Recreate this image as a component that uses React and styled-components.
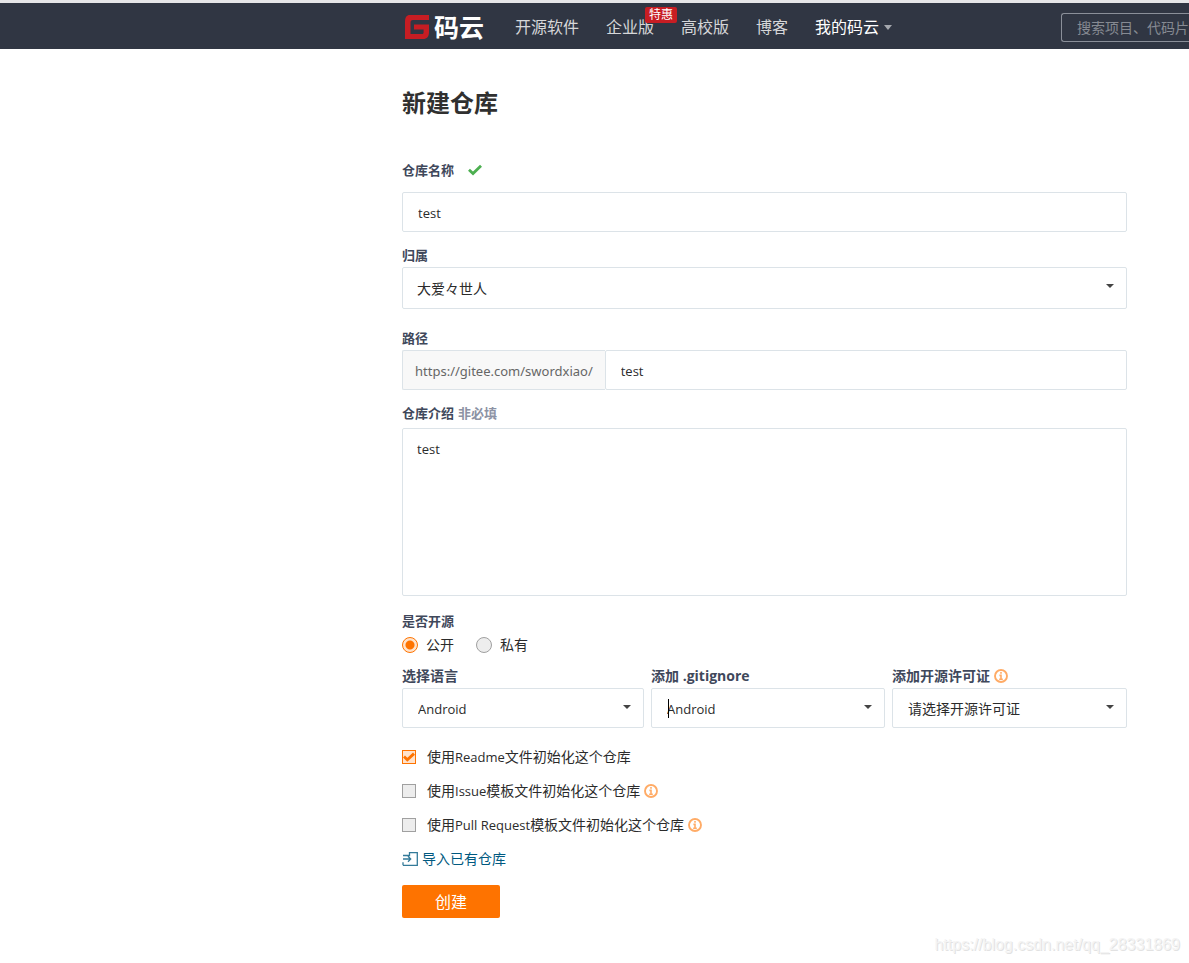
import React from "react";
import styled, { createGlobalStyle } from "styled-components";

const line = "#dce3e8";
const orange = "#fe7300";

const GlobalStyle = createGlobalStyle`
  * { box-sizing: border-box; }
  body {
    margin: 0;
    background: #fff;
    color: #2b2b2b;
    font-family: "Open Sans", "Noto Sans CJK SC", sans-serif;
    font-size: 14px;
    line-height: 20px;
  }
  input, select, textarea, button { font: inherit; color: inherit; margin: 0; }
`;

const Page = styled.div`
  position: relative;
  min-height: 100vh;
  overflow-x: hidden;
`;

const Header = styled.header`
  display: flex;
  align-items: center;
  height: 49px;
  padding: 2px 0 0 404px;
  border-top: 3px solid #e6e6e8;
  background: #303643;
`;

const Logo = styled.a`
  display: flex;
  align-items: center;
  gap: 4px;
  margin-right: 31px;
  color: #fff;
  font-size: 25px;
  font-weight: 700;
  line-height: 30px;
  text-decoration: none;
  white-space: nowrap;
`;

const Nav = styled.nav`
  display: flex;
  align-items: center;
  gap: 27px;
  flex: none;
`;

const NavLink = styled.a`
  position: relative;
  display: flex;
  align-items: center;
  gap: 5px;
  color: ${(p) => (p.$active ? "#fff" : "#d6d7d9")};
  font-size: 16px;
  line-height: 24px;
  text-decoration: none;
  white-space: nowrap;
`;

const Badge = styled.span`
  position: absolute;
  top: -8px;
  right: -23px;
  padding: 0 4px;
  border-radius: 2px;
  background: #c71d23;
  color: #fff;
  font-size: 12px;
  line-height: 16px;
`;

const Caret = styled.span`
  border: 4px solid transparent;
  border-top: 5px solid #a5a8ae;
  border-bottom: 0;
`;

const Search = styled.input`
  flex: none;
  width: 128px;
  height: 29px;
  margin-left: auto;
  padding: 0 0 0 15px;
  border: 1px solid #8a8f99;
  border-right: 0;
  border-radius: 3px 0 0 3px;
  background: transparent;
  outline: 0;
  color: #fff;
  &::placeholder { color: #868a92; opacity: 1; }
`;

const Form = styled.form`
  margin: 0 62px 0 402px;
  padding: 36px 0 45px;
`;

const Title = styled.h1`
  margin: 0 0 39px;
  color: #303030;
  font-size: 24px;
  line-height: 36px;
`;

const Field = styled.div`
  margin-bottom: ${(p) => p.$after}px;
`;

const Label = styled.label`
  display: flex;
  align-items: center;
  gap: 4px;
  margin-bottom: ${(p) => p.$after || 2}px;
  color: #40485b;
  font-size: ${(p) => (p.$large ? 14 : 13)}px;
  font-weight: 700;
  line-height: 20px;
  white-space: nowrap;
`;

const Optional = styled.span`
  color: #8c92a4;
`;

const Check = styled.svg`
  margin-left: 10px;
`;

const TextInput = styled.input`
  display: block;
  width: 100%;
  height: 40px;
  padding: 2px 15px 0;
  border: 1px solid ${line};
  border-radius: 2px;
  background: #fff;
  outline: 0;
  font-size: 13px;
`;

const TextArea = styled.textarea`
  display: block;
  width: 100%;
  height: 168px;
  padding: 10px 14px;
  border: 1px solid ${line};
  border-radius: 2px;
  outline: 0;
  resize: none;
  font-size: 13px;
`;

const PathRow = styled.div`
  display: flex;
`;

const Prefix = styled.span`
  flex: none;
  padding: 10px 12px 8px;
  border: 1px solid ${line};
  border-right: 0;
  border-radius: 2px 0 0 2px;
  background: #f8f8f8;
  color: #666;
  font-family: "Noto Sans", sans-serif;
  font-size: 13px;
`;

const SelectBox = styled.div`
  position: relative;
`;

const Select = styled.select`
  display: block;
  appearance: none;
  width: 100%;
  height: ${(p) => (p.$tall ? 42 : 40)}px;
  padding: 2px 30px 0 ${(p) => (p.$tall ? 14 : 15)}px;
  border: 1px solid ${line};
  border-radius: 2px;
  background: #fff;
  outline: 0;
  font-size: ${(p) => (p.$latin ? 13 : 14)}px;
`;

const SelectArrow = styled.span`
  position: absolute;
  top: 17px;
  right: 13px;
  border: 4px solid transparent;
  border-top-color: #444;
  border-bottom: 0;
  pointer-events: none;
`;

const TextCursor = styled.span`
  position: absolute;
  top: 11px;
  left: 17px;
  width: 1px;
  height: 19px;
  background: #000;
`;

const Columns = styled.div`
  display: grid;
  grid-template-columns: 242fr 234fr 235fr;
  gap: 7px;
  margin-bottom: 19px;
`;

const RadioRow = styled.div`
  display: flex;
  gap: 22px;
`;

const Choice = styled.label`
  display: flex;
  align-items: center;
  gap: ${(p) => p.$gap}px;
  line-height: 20px;
  white-space: nowrap;
`;

const Latin = styled.span`
  font-size: 13px;
`;

const Radio = styled.input`
  appearance: none;
  width: 16px;
  height: 16px;
  border: 1px solid #a0a0a0;
  border-radius: 50%;
  background: #ededed;
  &:checked {
    border-color: ${orange};
    background: radial-gradient(circle, ${orange} 4px, #ffe3cc 5px);
  }
`;

const Options = styled.div`
  display: flex;
  flex-direction: column;
  align-items: flex-start;
  gap: 14px;
`;

const OptionLine = styled.div`
  display: flex;
  align-items: center;
  gap: 4px;
`;

const TickWrap = styled.span`
  position: relative;
  display: flex;
`;

const Tick = styled.input`
  appearance: none;
  width: 14px;
  height: 14px;
  border: 1px solid #a0a0a0;
  background: #ededed;
  &:checked {
    border-color: ${orange};
    background: #ffe3cc;
  }
  & + svg { display: none; }
  &:checked + svg { display: block; }
`;

const TickMark = styled.svg`
  position: absolute;
  inset: 0;
  pointer-events: none;
`;

const ImportLink = styled.a`
  display: flex;
  align-items: center;
  gap: 4px;
  color: #005980;
  text-decoration: none;
`;

const Submit = styled.button`
  display: block;
  width: 98px;
  height: 33px;
  margin-top: 16px;
  padding: 0;
  border: 0;
  border-radius: 2px;
  background: ${orange};
  color: #fff;
  font-size: 16px;
`;

const Watermark = styled.span`
  position: absolute;
  right: 9px;
  bottom: 8px;
  color: #f4f4f4;
  font-family: "Liberation Sans", Arial, sans-serif;
  font-size: 16px;
  line-height: 20px;
  text-shadow: 1px 1px 0 #e2e2e2;
`;

const InfoIcon = () => (
  <svg width="14" height="14" viewBox="0 0 14 14" fill="none" stroke="#ffab66" aria-hidden="true">
    <circle cx="7" cy="7" r="6" strokeWidth="1.9" />
    <path d="M7 3v1.8M5.4 6.4H7v4M5.2 10.3h3.6" strokeWidth="1.6" />
  </svg>
);

const ImportIcon = () => (
  <svg width="16" height="14" viewBox="0 0 16 14" fill="none" stroke="#337a99" strokeWidth="1.3" aria-hidden="true">
    <path d="M1 3.500h6.500V.700h7.800v12.600H1M1 10.300v3M1 7h7.500M6 4.300L8.700 7 6 9.700" />
  </svg>
);

const LogoMark = () => (
  <svg width="26" height="24" viewBox="0 0 26 24" aria-hidden="true">
    <path
      d="M6 0h19v5H9C7 5 6.500 6 6.500 8v11H18c1.200 0 1.600-.6 1.600-2v-2.500H10V9.500h15V17c0 4.500-2 7-6 7H1V7C1 2.500 2.500 0 6 0z"
      fill="#c71d23"
    />
  </svg>
);

function Dropdown({ id, value, tall, latin, cursor }) {
  return (
    <SelectBox>
      <Select id={id} $tall={tall} $latin={latin} defaultValue={value}>
        <option>{value}</option>
      </Select>
      <SelectArrow />
      {cursor && <TextCursor />}
    </SelectBox>
  );
}

function TickOption({ id, file, suffix, checked, info }) {
  return (
    <OptionLine>
      <Choice htmlFor={id} $gap={11}>
        <TickWrap>
          <Tick type="checkbox" id={id} defaultChecked={checked} />
          <TickMark width="14" height="14" viewBox="0 0 14 14" fill="none" stroke={orange} strokeWidth="2.800">
            <path d="M2 6.600l3.300 3.200L12 3.600" />
          </TickMark>
        </TickWrap>
        <span>
          使用<Latin>{file}</Latin>
          {suffix}
        </span>
      </Choice>
      {info && <InfoIcon />}
    </OptionLine>
  );
}

export default function App() {
  return (
    <Page>
      <GlobalStyle />
      <Header>
        <Logo href="#home">
          <LogoMark />
          码云
        </Logo>
        <Nav>
          <NavLink href="#explore">开源软件</NavLink>
          <NavLink href="#enterprise">
            企业版<Badge>特惠</Badge>
          </NavLink>
          <NavLink href="#education">高校版</NavLink>
          <NavLink href="#blog">博客</NavLink>
          <NavLink href="#mine" $active>
            我的码云
            <Caret />
          </NavLink>
        </Nav>
        <Search type="text" aria-label="搜索" placeholder="搜索项目、代码片段..." />
      </Header>

      <Form onSubmit={(e) => e.preventDefault()}>
        <Title>新建仓库</Title>

        <Field $after={13}>
          <Label htmlFor="name" $after={12}>
            仓库名称
            <Check width="14" height="12" viewBox="0 0 14 12" fill="none" stroke="#4caf50" strokeWidth="2.800">
              <path d="M1 5.800l4 3.700L13 1.700" />
            </Check>
          </Label>
          <TextInput id="name" defaultValue="test" />
        </Field>

        <Field $after={19}>
          <Label htmlFor="owner">归属</Label>
          <Dropdown id="owner" value="大爱々世人" tall />
        </Field>

        <Field $after={13}>
          <Label htmlFor="path">路径</Label>
          <PathRow>
            <Prefix>https://gitee.com/swordxiao/</Prefix>
            <TextInput id="path" defaultValue="test" />
          </PathRow>
        </Field>

        <Field $after={15}>
          <Label htmlFor="intro" $after={5}>
            仓库介绍 <Optional>非必填</Optional>
          </Label>
          <TextArea id="intro" defaultValue="test" />
        </Field>

        <Field $after={11}>
          <Label as="div" id="visibility" $after={4}>
            是否开源
          </Label>
          <RadioRow role="radiogroup" aria-labelledby="visibility">
            <Choice $gap={8}>
              <Radio type="radio" name="visibility" defaultChecked />
              公开
            </Choice>
            <Choice $gap={8}>
              <Radio type="radio" name="visibility" />
              私有
            </Choice>
          </RadioRow>
        </Field>

        <Columns>
          <div>
            <Label htmlFor="language" $large>选择语言</Label>
            <Dropdown id="language" value="Android" latin />
          </div>
          <div>
            <Label htmlFor="ignore" $large>添加 .gitignore</Label>
            <Dropdown id="ignore" value="Android" latin cursor />
          </div>
          <div>
            <Label htmlFor="license" $large>
              添加开源许可证
              <InfoIcon />
            </Label>
            <Dropdown id="license" value="请选择开源许可证" />
          </div>
        </Columns>

        <Options>
          <TickOption id="readme" file="Readme" suffix="文件初始化这个仓库" checked />
          <TickOption id="issue" file="Issue" suffix="模板文件初始化这个仓库" info />
          <TickOption id="pull" file="Pull Request" suffix="模板文件初始化这个仓库" info />
          <ImportLink href="#import">
            <ImportIcon />
            导入已有仓库
          </ImportLink>
        </Options>

        <Submit type="submit">创建</Submit>
      </Form>
      <Watermark>https://blog.csdn.net/qq_28331869</Watermark>
    </Page>
  );
}
